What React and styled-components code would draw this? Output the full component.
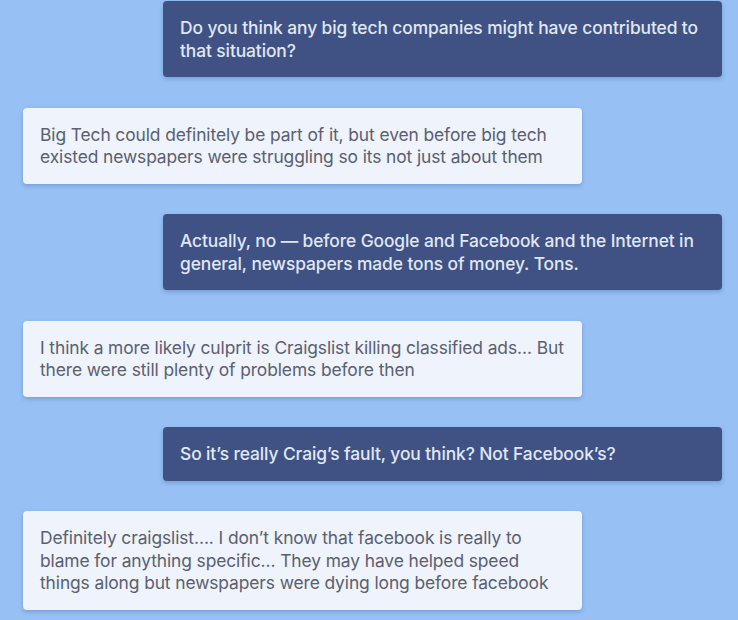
import React from "react";
import styled, { createGlobalStyle } from "styled-components";

const GlobalStyle = createGlobalStyle`
  html, body {
    margin: 0;
    padding: 0;
    background: #97c1f5;
  }
  body {
    font-family: Inter, "Noto Sans", "Liberation Sans", sans-serif;
  }
`;

const Thread = styled.div`
  display: flex;
  flex-direction: column;
  gap: 30.5px;
  padding: 1px 16px 12px 23px;
`;

const Row = styled.div`
  display: flex;
  justify-content: ${(p) => (p.$mine ? "flex-end" : "flex-start")};
`;

const Bubble = styled.div`
  box-sizing: border-box;
  width: 559px;
  padding: 16px 17px 15px;
  border-radius: 4px;
  font-size: 17.4px;
  line-height: 22.5px;
  letter-spacing: -0.1px;
  background: ${(p) => (p.$mine ? "#3f5283" : "#eef3fc")};
  color: ${(p) => (p.$mine ? "#e0e7f6" : "#5b606f")};
  font-weight: ${(p) => (p.$mine ? 500 : 400)};
  box-shadow: 0 2px 4px rgba(40, 70, 130, 0.28);
`;

const messages = [
  { mine: true, text: "Do you think any big tech companies might have contributed to that situation?" },
  { mine: false, text: "Big Tech could definitely be part of it, but even before big tech existed newspapers were struggling so its not just about them" },
  { mine: true, text: "Actually, no \u2014 before Google and Facebook and the Internet in general, newspapers made tons of money. Tons." },
  { mine: false, text: "I think a more likely culprit is Craigslist killing classified ads\u2026 But there were still plenty of problems before then" },
  { mine: true, text: "So it\u2019s really Craig\u2019s fault, you think? Not Facebook\u2019s?" },
  { mine: false, text: "Definitely craigslist\u2026. I don\u2019t know that facebook is really to blame for anything specific\u2026 They may have helped speed things along but newspapers were dying long before facebook" },
];

export default function App() {
  return (
    <>
      <GlobalStyle />
      <Thread>
        {messages.map((m, i) => (
          <Row key={i} $mine={m.mine}>
            <Bubble $mine={m.mine}>{m.text}</Bubble>
          </Row>
        ))}
      </Thread>
    </>
  );
}
